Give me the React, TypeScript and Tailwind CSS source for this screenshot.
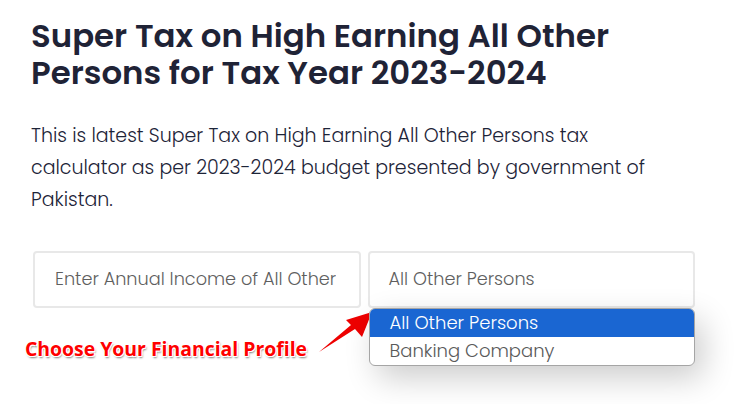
import { useState } from "react";

const options = ["All Other Persons", "Banking Company"];

export default function App() {
  const [selected] = useState(options[0]);

  return (
    <main className="min-h-screen bg-white font-['Poppins','Inter',sans-serif] text-[#1f2336]">
      <div className="w-[720px] pl-[31px] pt-[17px]">
        <h1 className="w-[650px] text-[32.4px] font-semibold leading-[37px]">
          Super Tax on High Earning All Other Persons for Tax Year 2023-2024
        </h1>
        <p className="mt-[29px] w-[656px] text-[19px] font-light leading-[32px] text-[#1d2438]">
          This is latest Super Tax on High Earning All Other Persons tax calculator as per 2023-2024 budget presented by
          government of Pakistan.
        </p>

        <div className="relative mt-[35px] ml-[2px] grid w-[662px] grid-cols-2 gap-[7px]">
          <div className="flex h-[57px] items-center rounded-[4px] border-2 border-[#e8e8e8] px-[20px] text-[17.7px] font-light text-[#5f5f5f]">
            <span className="truncate">Enter Annual Income of All Other</span>
          </div>
          <div className="relative">
            <div className="flex h-[57px] items-center rounded-[4px] border-2 border-[#e8e8e8] px-[19px] text-[17.7px] font-light text-[#5f5f5f]">
              {selected}
            </div>
            <ul className="absolute left-[1px] top-[57px] z-10 w-[326px] overflow-hidden rounded-[6px] border border-[#a5a5a5] bg-white text-[18px] font-light shadow-[8px_12px_32px_rgba(0,0,0,0.2)]">
              {options.map((o) => (
                <li
                  key={o}
                  className={`h-[28px] px-[20px] leading-[28px] ${
                    o === selected ? "bg-[#1a66d2] text-white" : "text-[#5a5a5a]"
                  }`}
                >
                  {o}
                </li>
              ))}
            </ul>
          </div>

          <span className="absolute left-[-8px] top-[83px] font-['Open_Sans',sans-serif] text-[19.4px] font-bold text-[#ff0000] [text-shadow:1px_1px_0_#fff,-1px_-1px_0_#fff,1px_-1px_0_#fff,-1px_1px_0_#fff,1px_2px_2px_rgba(0,0,0,0.5)]">
            Choose Your Financial Profile
          </span>
          <svg className="absolute left-[280px] top-[57px]" width="64" height="50" viewBox="0 0 64 50">
            <path d="M6 44 L38 17 L33 12 L59 4 L49 29 L42 21 Z" fill="#ee0000" />
          </svg>
        </div>
      </div>
    </main>
  );
}
